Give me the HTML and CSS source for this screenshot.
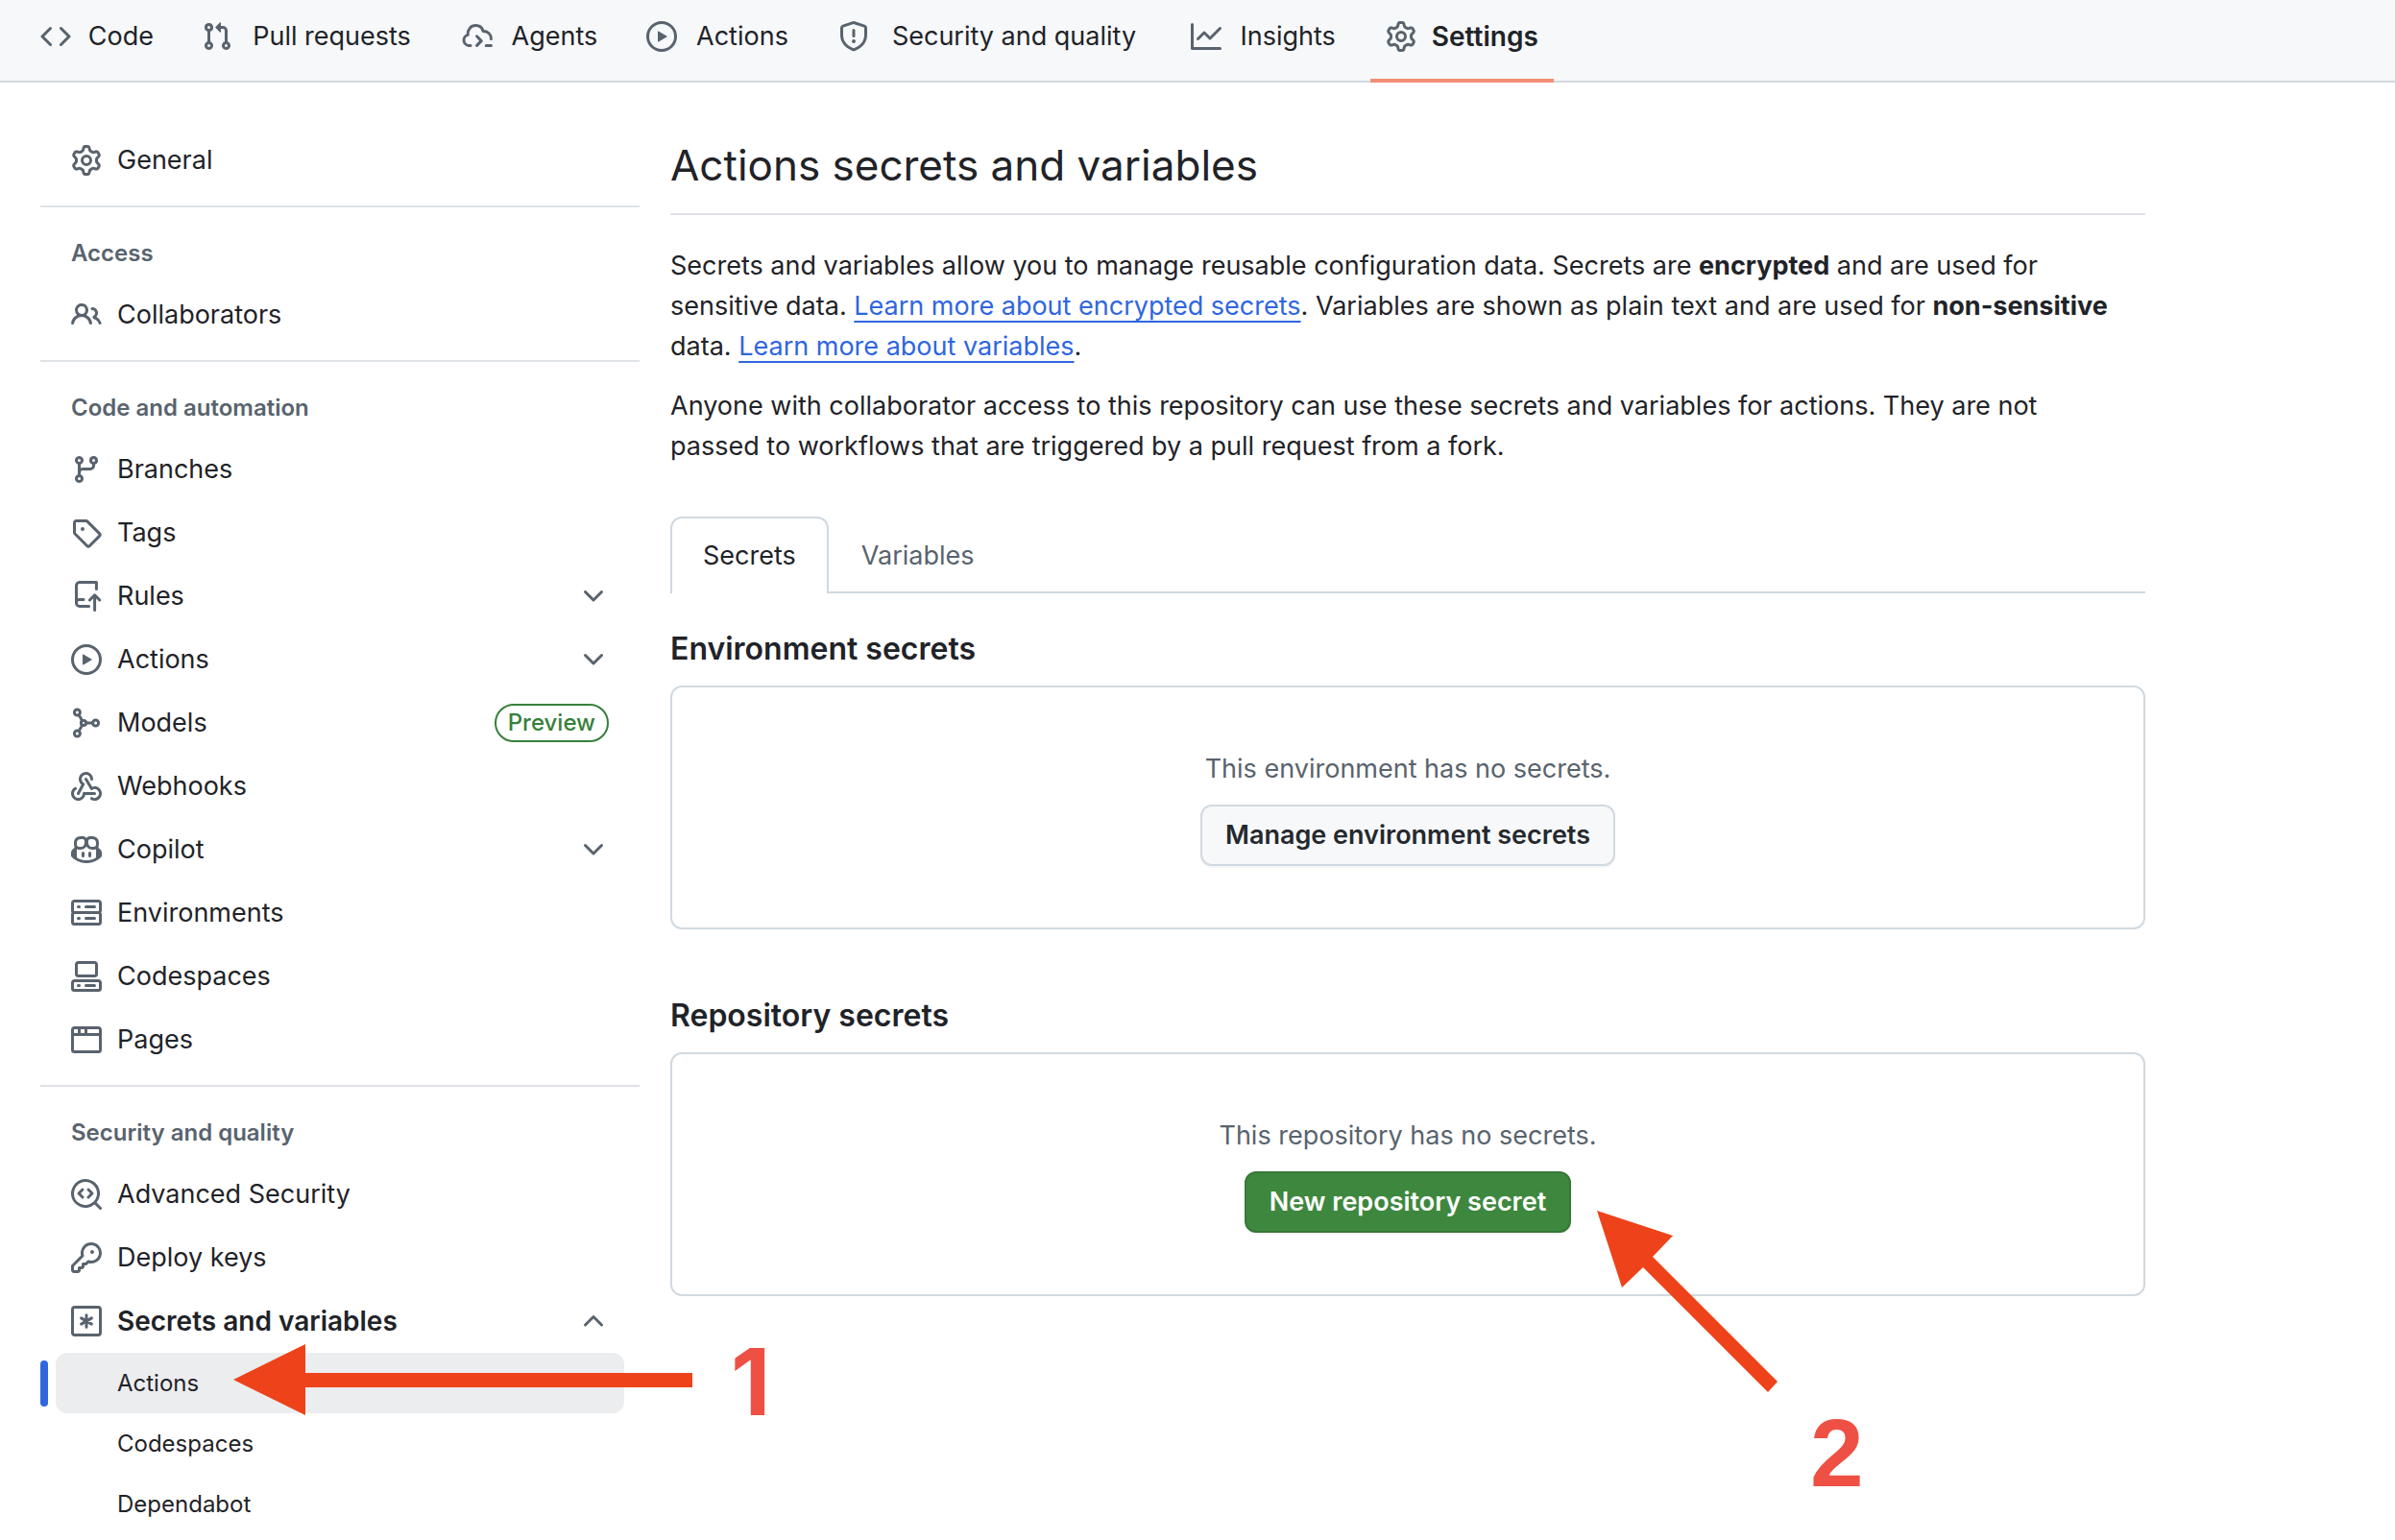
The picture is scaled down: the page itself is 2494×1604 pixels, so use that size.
FILE: index.html
```html
<!DOCTYPE html>
<html lang="en">

<head>
    <meta charset="UTF-8" />
    <title>Actions secrets and variables</title>
    <!-- Styles -->
    <link rel="stylesheet" href="styles.css">
</head>

<body>
    <!-- Icon sprite -->
    <svg class="sprite" aria-hidden="true">
        <symbol id="code" viewBox="0 0 16 16">
            <path d="m11.28 3.22 4.25 4.25a.75.75 0 0 1 0 1.06l-4.25 4.25a.749.749 0 0 1-1.275-.326.749.749 0 0 1 .215-.734L13.94 8l-3.72-3.72a.749.749 0 0 1 .326-1.275.749.749 0 0 1 .734.215Zm-6.56 0a.751.751 0 0 1 1.042.018.751.751 0 0 1 .018 1.042L2.06 8l3.72 3.72a.749.749 0 0 1-.326 1.275.749.749 0 0 1-.734-.215L.47 8.53a.75.75 0 0 1 0-1.06Z" />
        </symbol>
        <symbol id="pull" viewBox="0 0 16 16">
            <path d="M1.5 3.25a2.25 2.25 0 1 1 3 2.122v5.256a2.251 2.251 0 1 1-1.5 0V5.372A2.25 2.25 0 0 1 1.5 3.25Zm5.677-.177L9.573.677A.25.25 0 0 1 10 .854V2.5h1A2.5 2.5 0 0 1 13.5 5v5.628a2.251 2.251 0 1 1-1.5 0V5a1 1 0 0 0-1-1h-1v1.646a.25.25 0 0 1-.427.177L7.177 3.427a.25.25 0 0 1 0-.354ZM3.75 2.5a.75.75 0 1 0 0 1.5.75.75 0 0 0 0-1.5Zm0 9.5a.75.75 0 1 0 0 1.5.75.75 0 0 0 0-1.5Zm8.25.75a.75.75 0 1 0 1.5 0 .75.75 0 0 0-1.5 0Z" />
        </symbol>
        <symbol id="agents" viewBox="0 0 16 16">
            <g fill="none" stroke="currentColor" stroke-width="1.5" stroke-linecap="round" stroke-linejoin="round">
                <path d="M4.5 12.7H3.6A2.8 2.8 0 0 1 3.1 7.2C2.9 4.4 4.7 2.3 7.2 2.3c2 0 3.4 1.2 3.9 3 2.4 0 4.1 1.6 4.1 4" />
                <path d="m7.8 7.9 2.3 2.4-2.3 2.4M12.6 12.7h2.6" />
            </g>
        </symbol>
        <symbol id="play" viewBox="0 0 16 16">
            <path d="M8 0a8 8 0 1 1 0 16A8 8 0 0 1 8 0ZM1.5 8a6.5 6.5 0 1 0 13 0 6.5 6.5 0 0 0-13 0Zm4.879-2.773 4.264 2.559a.25.25 0 0 1 0 .428l-4.264 2.559A.25.25 0 0 1 6 10.559V5.442a.25.25 0 0 1 .379-.215Z" />
        </symbol>
        <symbol id="shield" viewBox="0 0 16 16">
            <path d="M7.467.133a1.748 1.748 0 0 1 1.066 0l5.25 1.68A1.75 1.75 0 0 1 15 3.48V7c0 1.566-.32 3.182-1.303 4.682-.983 1.498-2.585 2.813-5.032 3.855a1.697 1.697 0 0 1-1.33 0c-2.447-1.042-4.049-2.357-5.032-3.855C1.32 10.182 1 8.566 1 7V3.48a1.755 1.755 0 0 1 1.217-1.667Zm.61 1.429a.25.25 0 0 0-.153 0l-5.25 1.68a.25.25 0 0 0-.174.238V7c0 1.358.275 2.666 1.057 3.86.784 1.194 2.121 2.34 4.366 3.297a.196.196 0 0 0 .154 0c2.245-.956 3.582-2.104 4.366-3.298C13.225 9.666 13.5 8.36 13.5 7V3.48a.251.251 0 0 0-.174-.237l-5.25-1.68ZM8.75 4.75v3a.75.75 0 0 1-1.5 0v-3a.75.75 0 0 1 1.5 0ZM9 10.5a1 1 0 1 1-2 0 1 1 0 0 1 2 0Z" />
        </symbol>
        <symbol id="graph" viewBox="0 0 16 16">
            <path d="M1.5 1.75V13.5h13.75a.75.75 0 0 1 0 1.5H.75a.75.75 0 0 1-.75-.75V1.75a.75.75 0 0 1 1.5 0Zm14.28 2.53-5.25 5.25a.75.75 0 0 1-1.06 0L7 7.06 4.28 9.78a.751.751 0 0 1-1.042-.018.751.751 0 0 1-.018-1.042l3.25-3.25a.75.75 0 0 1 1.06 0L10 7.94l4.72-4.72a.751.751 0 0 1 1.042.018.751.751 0 0 1 .018 1.042Z" />
        </symbol>
        <symbol id="gear" viewBox="0 0 16 16">
            <path d="M8 0a8.2 8.2 0 0 1 .701.031C9.444.095 9.99.645 10.16 1.29l.288 1.107c.018.066.079.158.212.224.231.114.454.243.668.386.123.082.233.09.299.071l1.103-.303c.644-.176 1.392.021 1.82.63.27.385.506.792.704 1.218.315.675.111 1.422-.364 1.891l-.814.806c-.049.048-.098.147-.088.294.016.257.016.515 0 .772-.01.147.038.246.088.294l.814.806c.475.469.679 1.216.364 1.891a7.977 7.977 0 0 1-.704 1.217c-.428.61-1.176.807-1.82.63l-1.102-.302c-.067-.019-.177-.011-.3.071a5.909 5.909 0 0 1-.668.386c-.133.066-.194.158-.211.224l-.29 1.106c-.168.646-.715 1.196-1.458 1.26a8.006 8.006 0 0 1-1.402 0c-.743-.064-1.289-.614-1.458-1.26l-.289-1.106c-.018-.066-.079-.158-.212-.224a5.738 5.738 0 0 1-.668-.386c-.123-.082-.233-.09-.299-.071l-1.103.303c-.644.176-1.392-.021-1.82-.63a8.12 8.12 0 0 1-.704-1.218c-.315-.675-.111-1.422.363-1.891l.815-.806c.05-.048.098-.147.088-.294a6.214 6.214 0 0 1 0-.772c.01-.147-.038-.246-.088-.294l-.815-.806C.635 6.045.431 5.298.746 4.623a7.92 7.92 0 0 1 .704-1.217c.428-.61 1.176-.807 1.82-.63l1.102.302c.067.019.177.011.3-.071.214-.143.437-.272.668-.386.133-.066.194-.158.211-.224l.29-1.106C6.009.645 6.556.095 7.299.03 7.53.01 7.764 0 8 0Zm-.571 1.525c-.036.003-.108.036-.137.146l-.289 1.105c-.147.561-.549.967-.998 1.189-.173.086-.34.183-.5.29-.417.278-.97.423-1.529.27l-1.103-.303c-.109-.03-.175.016-.195.045-.22.312-.412.644-.573.99-.014.031-.021.11.059.19l.815.806c.411.406.562.957.53 1.456a4.709 4.709 0 0 0 0 .582c.032.499-.119 1.05-.53 1.456l-.815.806c-.081.08-.073.159-.059.19.162.346.353.677.573.989.02.03.085.076.195.046l1.102-.303c.56-.153 1.113-.008 1.53.27.161.107.328.204.501.29.447.222.85.629.997 1.189l.289 1.105c.029.109.101.143.137.146a6.6 6.6 0 0 0 1.142 0c.036-.003.108-.036.137-.146l.289-1.105c.147-.561.549-.967.998-1.189.173-.086.34-.183.5-.29.417-.278.97-.423 1.529-.27l1.103.303c.109.029.175-.016.195-.045.22-.313.411-.644.573-.99.014-.031.021-.11-.059-.19l-.815-.806c-.411-.406-.562-.957-.53-1.456a4.709 4.709 0 0 0 0-.582c-.032-.499.119-1.05.53-1.456l.815-.806c.081-.08.073-.159.059-.19a6.464 6.464 0 0 0-.573-.989c-.02-.03-.085-.076-.195-.046l-1.102.303c-.56.153-1.113.008-1.53-.27a4.44 4.44 0 0 0-.501-.29c-.447-.222-.85-.629-.997-1.189l-.289-1.105c-.029-.11-.101-.143-.137-.146a6.6 6.6 0 0 0-1.142 0ZM11 8a3 3 0 1 1-6 0 3 3 0 0 1 6 0ZM9.5 8a1.5 1.5 0 1 0-3.001.001A1.5 1.5 0 0 0 9.5 8Z" />
        </symbol>
        <symbol id="people" viewBox="0 0 16 16">
            <path d="M2 5.5a3.5 3.5 0 1 1 5.898 2.549 5.508 5.508 0 0 1 3.034 4.084.75.75 0 1 1-1.482.235 4 4 0 0 0-7.9 0 .75.75 0 0 1-1.482-.236A5.507 5.507 0 0 1 3.102 8.05 3.493 3.493 0 0 1 2 5.5ZM11 4a3.001 3.001 0 0 1 2.22 5.018 5.01 5.01 0 0 1 2.56 3.012.749.749 0 0 1-.885.954.752.752 0 0 1-.549-.514 3.507 3.507 0 0 0-2.522-2.372.75.75 0 0 1-.574-.73v-.352a.75.75 0 0 1 .416-.672A1.5 1.5 0 0 0 11 5.5.75.75 0 0 1 11 4Zm-5.5-.5a2 2 0 1 0-.001 3.999A2 2 0 0 0 5.5 3.5Z" />
        </symbol>
        <symbol id="branch" viewBox="0 0 16 16">
            <path d="M9.5 3.25a2.25 2.25 0 1 1 3 2.122V6A2.5 2.5 0 0 1 10 8.5H6a1 1 0 0 0-1 1v1.128a2.251 2.251 0 1 1-1.5 0V5.372a2.25 2.25 0 1 1 1.5 0v1.836A2.493 2.493 0 0 1 6 7h4a1 1 0 0 0 1-1v-.628A2.25 2.25 0 0 1 9.5 3.25Zm-6 0a.75.75 0 1 0 1.5 0 .75.75 0 0 0-1.5 0Zm8.25-.75a.75.75 0 1 0 0 1.5.75.75 0 0 0 0-1.5ZM4.25 12a.75.75 0 1 0 0 1.5.75.75 0 0 0 0-1.5Z" />
        </symbol>
        <symbol id="tag" viewBox="0 0 16 16">
            <path d="M1 7.775V2.75C1 1.784 1.784 1 2.75 1h5.025c.464 0 .91.184 1.238.513l6.25 6.25a1.75 1.75 0 0 1 0 2.474l-5.026 5.026a1.75 1.75 0 0 1-2.474 0l-6.25-6.25A1.752 1.752 0 0 1 1 7.775Zm1.5 0c0 .066.026.13.073.177l6.25 6.25a.25.25 0 0 0 .354 0l5.025-5.025a.25.25 0 0 0 0-.354l-6.25-6.25a.25.25 0 0 0-.177-.073H2.75a.25.25 0 0 0-.25.25ZM6 5a1 1 0 1 1 0 2 1 1 0 0 1 0-2Z" />
        </symbol>
        <symbol id="rules" viewBox="0 0 16 16">
            <g fill="none" stroke="currentColor" stroke-width="1.5" stroke-linecap="round" stroke-linejoin="round">
                <path d="M13.2 4.2V.75H4.4A1.7 1.7 0 0 0 2.75 2.4v9.2a1.7 1.7 0 0 0 1.7 1.65h4.8" />
                <path d="M2.9 10.4a1.7 1.7 0 0 1 1.5-.7h2.1" />
                <path d="M12.3 15.2V7.5M9.7 10l2.6-2.6L14.9 10" />
            </g>
        </symbol>
        <symbol id="models" viewBox="0 0 16 16">
            <g fill="none" stroke="currentColor" stroke-width="1.5">
                <circle cx="3.2" cy="2.5" r="1.5" />
                <circle cx="3.2" cy="13.5" r="1.5" />
                <circle cx="6.5" cy="8" r="1.3" />
                <circle cx="12.8" cy="8" r="1.5" />
                <path d="M4 3.8 5.8 6.8M4 12.2 5.8 9.2M7.8 8h3.5" />
            </g>
        </symbol>
        <symbol id="webhook" viewBox="0 0 16 16">
            <path d="M5.5 4.25a2.25 2.25 0 0 1 4.5 0 .75.75 0 0 0 1.5 0 3.75 3.75 0 1 0-6.14 2.889l-2.272 4.258a.75.75 0 0 0 1.324.706L7 7.25a.75.75 0 0 0-.309-1.015A2.25 2.25 0 0 1 5.5 4.25Z" />
            <path d="M7.364 3.607a.75.75 0 0 1 1.03.257l2.608 4.349a3.75 3.75 0 1 1-.628 6.785.75.75 0 0 1 .752-1.299 2.25 2.25 0 1 0-.033-3.88.75.75 0 0 1-1.03-.256L7.107 4.636a.75.75 0 0 1 .257-1.03Z" />
            <path d="M2.9 8.776A.75.75 0 0 1 2.625 9.8 2.25 2.25 0 1 0 6 11.75a.75.75 0 0 1 .75-.751h5.5a.75.75 0 0 1 0 1.5H7.425a3.751 3.751 0 1 1-5.55-3.998.75.75 0 0 1 1.024.274Z" />
        </symbol>
        <symbol id="copilot" viewBox="0 0 16 16">
            <path d="M7.998 15.035c-4.562 0-7.873-2.914-7.998-3.749V9.338c.085-.628.677-1.686 1.588-2.065.013-.07.024-.143.036-.218.029-.183.06-.384.126-.612-.201-.508-.254-1.084-.254-1.656 0-.87.128-1.769.693-2.484.579-.733 1.494-1.124 2.724-1.261 1.206-.134 2.262.034 2.944.765.05.053.096.108.139.165.044-.057.094-.112.143-.165.682-.731 1.738-.899 2.944-.765 1.23.137 2.145.528 2.724 1.261.566.715.693 1.614.693 2.484 0 .572-.053 1.148-.254 1.656.066.228.098.429.126.612.012.076.024.148.037.218.924.385 1.522 1.471 1.591 2.095v1.872c0 .766-3.351 3.795-8.002 3.795Zm0-1.485c2.28 0 4.584-1.11 5.002-1.433V7.862l-.023-.116c-.49.21-1.075.291-1.727.291-1.146 0-2.059-.327-2.71-.991A3.222 3.222 0 0 1 8 6.303a3.24 3.24 0 0 1-.544.743c-.65.664-1.563.991-2.71.991-.652 0-1.236-.081-1.727-.291l-.023.116v4.255c.419.323 2.722 1.433 5.002 1.433ZM6.762 2.83c-.193-.206-.637-.413-1.682-.297-1.019.113-1.479.404-1.713.7-.247.312-.369.789-.369 1.554 0 .793.129 1.171.308 1.371.162.181.519.379 1.442.379.853 0 1.339-.235 1.638-.54.315-.322.527-.827.617-1.553.117-.935-.037-1.395-.241-1.614Zm4.155-.297c-1.044-.116-1.488.091-1.681.297-.204.219-.359.679-.242 1.614.091.726.303 1.231.618 1.553.299.305.784.54 1.638.54.922 0 1.28-.198 1.442-.379.179-.2.308-.578.308-1.371 0-.765-.123-1.242-.37-1.554-.233-.296-.693-.587-1.713-.7Z" />
            <path d="M6.25 9.037a.75.75 0 0 1 .75.75v1.501a.75.75 0 0 1-1.5 0V9.787a.75.75 0 0 1 .75-.75Zm4.25.75v1.501a.75.75 0 0 1-1.5 0V9.787a.75.75 0 0 1 1.5 0Z" />
        </symbol>
        <symbol id="server" viewBox="0 0 16 16">
            <path d="M1.75 1h12.5c.966 0 1.75.784 1.75 1.75v4c0 .372-.116.717-.314 1 .198.283.314.628.314 1v4a1.75 1.75 0 0 1-1.75 1.75H1.75A1.75 1.75 0 0 1 0 12.75v-4c0-.358.109-.707.314-1a1.739 1.739 0 0 1-.314-1v-4C0 1.784.784 1 1.75 1ZM1.5 2.75v4c0 .138.112.25.25.25h12.5a.25.25 0 0 0 .25-.25v-4a.25.25 0 0 0-.25-.25H1.75a.25.25 0 0 0-.25.25Zm.25 5.75a.25.25 0 0 0-.25.25v4c0 .138.112.25.25.25h12.5a.25.25 0 0 0 .25-.25v-4a.25.25 0 0 0-.25-.25ZM7 4.75A.75.75 0 0 1 7.75 4h4.5a.75.75 0 0 1 0 1.5h-4.5A.75.75 0 0 1 7 4.75ZM7.75 10h4.5a.75.75 0 0 1 0 1.5h-4.5a.75.75 0 0 1 0-1.5ZM3 4.75A.75.75 0 0 1 3.75 4h.5a.75.75 0 0 1 0 1.5h-.5A.75.75 0 0 1 3 4.75ZM3.75 10h.5a.75.75 0 0 1 0 1.5h-.5a.75.75 0 0 1 0-1.5Z" />
        </symbol>
        <symbol id="codespaces" viewBox="0 0 16 16">
            <path d="M0 11.25c0-.966.784-1.75 1.75-1.75h12.5c.966 0 1.75.784 1.75 1.75v3A1.75 1.75 0 0 1 14.25 16H1.75A1.75 1.75 0 0 1 0 14.25Zm2-9.5C2 .784 2.784 0 3.75 0h8.5C13.216 0 14 .784 14 1.75v5a1.75 1.75 0 0 1-1.75 1.75h-8.5A1.75 1.75 0 0 1 2 6.75Zm1.75-.25a.25.25 0 0 0-.25.25v5c0 .138.112.25.25.25h8.5a.25.25 0 0 0 .25-.25v-5a.25.25 0 0 0-.25-.25Zm-2 9.5a.25.25 0 0 0-.25.25v3c0 .138.112.25.25.25h12.5a.25.25 0 0 0 .25-.25v-3a.25.25 0 0 0-.25-.25Z" />
            <path d="M7 12.75a.75.75 0 0 1 .75-.75h4.5a.75.75 0 0 1 0 1.5h-4.5a.75.75 0 0 1-.75-.75Zm-4 0a.75.75 0 0 1 .75-.75h.5a.75.75 0 0 1 0 1.5h-.5a.75.75 0 0 1-.75-.75Z" />
        </symbol>
        <symbol id="browser" viewBox="0 0 16 16">
            <path d="M0 2.75C0 1.784.784 1 1.75 1h12.5c.966 0 1.75.784 1.75 1.75v10.5A1.75 1.75 0 0 1 14.25 15H1.75A1.75 1.75 0 0 1 0 13.25ZM14.5 6h-13v7.25c0 .138.112.25.25.25h12.5a.25.25 0 0 0 .25-.25Zm-6-3.5v2h6V2.75a.25.25 0 0 0-.25-.25ZM5 2.5v2h2v-2Zm-3.25 0a.25.25 0 0 0-.25.25V4.5h2v-2Z" />
        </symbol>
        <symbol id="codescan" viewBox="0 0 16 16">
            <path d="M8.47 4.97a.75.75 0 0 0 0 1.06L9.94 7.5 8.47 8.97a.75.75 0 1 0 1.06 1.06l2-2a.75.75 0 0 0 0-1.06l-2-2a.75.75 0 0 0-1.06 0ZM6.53 6.03a.75.75 0 0 0-1.06-1.06l-2 2a.75.75 0 0 0 0 1.06l2 2a.75.75 0 1 0 1.06-1.06L5.06 7.5l1.47-1.47Z" />
            <path d="M12.246 13.307a7.501 7.501 0 1 1 1.06-1.06l2.474 2.473a.749.749 0 0 1-1.06 1.06ZM1.5 7.5a6.002 6.002 0 0 0 3.608 5.504 6.002 6.002 0 0 0 6.486-1.117.748.748 0 0 1 .292-.293A6 6 0 1 0 1.5 7.5Z" />
        </symbol>
        <symbol id="key" viewBox="0 0 16 16">
            <path d="M10.5 0a5.499 5.499 0 1 1-1.288 10.848l-.932.932a.749.749 0 0 1-.53.22H7v.75a.749.749 0 0 1-.22.53l-.5.5a.749.749 0 0 1-.53.22H5v.75a.749.749 0 0 1-.22.53l-.5.5a.749.749 0 0 1-.53.22h-2A1.75 1.75 0 0 1 0 14.25v-2c0-.199.079-.389.22-.53l4.932-4.932A5.5 5.5 0 0 1 10.5 0Zm-4 5.5c-.001.431.069.86.205 1.269a.75.75 0 0 1-.181.768L1.5 12.56v1.69c0 .138.112.25.25.25h1.69l.06-.06v-1.19a.75.75 0 0 1 .75-.75h1.19l.06-.06v-1.19a.75.75 0 0 1 .75-.75h1.19l1.023-1.025a.75.75 0 0 1 .768-.18A4 4 0 1 0 6.5 5.5ZM11 6a1 1 0 1 1 0-2 1 1 0 0 1 0 2Z" />
        </symbol>
        <symbol id="asterisk" viewBox="0 0 16 16">
            <g fill="none" stroke="currentColor" stroke-width="1.5" stroke-linecap="round">
                <rect x=".75" y=".75" width="14.5" height="14.5" rx="1.2" />
                <path d="M8 4.9v6.2M5.3 6.45l5.4 3.1M10.7 6.45l-5.4 3.1" />
            </g>
        </symbol>
        <symbol id="down" viewBox="0 0 16 16">
            <path d="M12.78 5.22a.749.749 0 0 1 0 1.06l-4.25 4.25a.749.749 0 0 1-1.06 0L3.22 6.28a.749.749 0 1 1 1.06-1.06L8 8.939l3.72-3.719a.749.749 0 0 1 1.06 0Z" />
        </symbol>
        <symbol id="up" viewBox="0 0 16 16">
            <path d="M3.22 10.53a.749.749 0 0 1 0-1.06l4.25-4.25a.749.749 0 0 1 1.06 0l4.25 4.25a.749.749 0 1 1-1.06 1.06L8 6.811 4.28 10.53a.749.749 0 0 1-1.06 0Z" />
        </symbol>
    </svg>

    <nav class="topnav" aria-label="Repository">
        <a class="topnav-item" href="#"><svg class="icon"><use href="#code" /></svg><span class="topnav-text" data-content="Code">Code</span></a>
        <a class="topnav-item" href="#"><svg class="icon"><use href="#pull" /></svg><span class="topnav-text" data-content="Pull requests">Pull requests</span></a>
        <a class="topnav-item" href="#"><svg class="icon"><use href="#agents" /></svg><span class="topnav-text" data-content="Agents">Agents</span></a>
        <a class="topnav-item" href="#"><svg class="icon"><use href="#play" /></svg><span class="topnav-text" data-content="Actions">Actions</span></a>
        <a class="topnav-item" href="#"><svg class="icon"><use href="#shield" /></svg><span class="topnav-text" data-content="Security and quality">Security and quality</span></a>
        <a class="topnav-item" href="#"><svg class="icon"><use href="#graph" /></svg><span class="topnav-text" data-content="Insights">Insights</span></a>
        <a class="topnav-item selected" href="#" aria-current="page"><svg class="icon"><use href="#gear" /></svg><span class="topnav-text" data-content="Settings">Settings</span></a>
    </nav>

    <div class="layout">
        <nav class="sidebar" aria-label="Settings">
            <ul class="group">
                <li><a class="item" href="#"><svg class="icon"><use href="#gear" /></svg>General</a></li>
            </ul>

            <h3 class="group-title">Access</h3>
            <ul class="group">
                <li><a class="item" href="#"><svg class="icon"><use href="#people" /></svg>Collaborators</a></li>
            </ul>

            <h3 class="group-title">Code and automation</h3>
            <ul class="group">
                <li><a class="item" href="#"><svg class="icon"><use href="#branch" /></svg>Branches</a></li>
                <li><a class="item" href="#"><svg class="icon"><use href="#tag" /></svg>Tags</a></li>
                <li><button class="item" type="button"><svg class="icon"><use href="#rules" /></svg>Rules<svg class="icon trailing"><use href="#down" /></svg></button></li>
                <li><button class="item" type="button"><svg class="icon"><use href="#play" /></svg>Actions<svg class="icon trailing"><use href="#down" /></svg></button></li>
                <li><a class="item" href="#"><svg class="icon"><use href="#models" /></svg>Models<span class="label trailing">Preview</span></a></li>
                <li><a class="item" href="#"><svg class="icon"><use href="#webhook" /></svg>Webhooks</a></li>
                <li><button class="item" type="button"><svg class="icon"><use href="#copilot" /></svg>Copilot<svg class="icon trailing"><use href="#down" /></svg></button></li>
                <li><a class="item" href="#"><svg class="icon"><use href="#server" /></svg>Environments</a></li>
                <li><a class="item" href="#"><svg class="icon"><use href="#codespaces" /></svg>Codespaces</a></li>
                <li><a class="item" href="#"><svg class="icon"><use href="#browser" /></svg>Pages</a></li>
            </ul>

            <h3 class="group-title">Security and quality</h3>
            <ul class="group">
                <li><a class="item" href="#"><svg class="icon"><use href="#codescan" /></svg>Advanced Security</a></li>
                <li><a class="item" href="#"><svg class="icon"><use href="#key" /></svg>Deploy keys</a></li>
                <li>
                    <button class="item open" type="button" aria-expanded="true"><svg class="icon"><use href="#asterisk" /></svg>Secrets and variables<svg class="icon trailing"><use href="#up" /></svg></button>
                    <ul class="subgroup">
                        <li><a class="subitem active" href="#" aria-current="page">Actions</a></li>
                        <li><a class="subitem" href="#">Codespaces</a></li>
                        <li><a class="subitem" href="#">Dependabot</a></li>
                    </ul>
                </li>
            </ul>
        </nav>

        <main class="content">
            <h1 class="title">Actions secrets and variables</h1>
            <p class="text">Secrets and variables allow you to manage reusable configuration data. Secrets are <strong>encrypted</strong> and are used for sensitive data. <a class="link" href="#">Learn more about encrypted secrets</a>. Variables are shown as plain text and are used for <strong>non-sensitive</strong> data. <a class="link" href="#">Learn more about variables</a>.</p>
            <p class="text">Anyone with collaborator access to this repository can use these secrets and variables for actions. They are not passed to workflows that are triggered by a pull request from a fork.</p>

            <nav class="tabs" aria-label="Secrets and variables">
                <a class="tab current" href="#" aria-current="page">Secrets</a>
                <a class="tab" href="#">Variables</a>
            </nav>

            <section class="section">
                <h2 class="subtitle">Environment secrets</h2>
                <div class="box">
                    <p class="empty">This environment has no secrets.</p>
                    <button class="btn" type="button">Manage environment secrets</button>
                </div>
            </section>

            <section class="section">
                <h2 class="subtitle">Repository secrets</h2>
                <div class="box">
                    <p class="empty">This repository has no secrets.</p>
                    <button class="btn primary" type="button">New repository secret</button>
                </div>
            </section>
        </main>
    </div>

    <!-- Step markers over the page -->
    <svg class="arrow arrow-one" viewBox="0 0 478 74" aria-hidden="true">
        <polygon points="0,37 75,0 75,30 478,30 478,45 75,45 75,74" />
    </svg>
    <span class="step step-one">1</span>
    <svg class="arrow arrow-two" viewBox="0 0 188 189" aria-hidden="true">
        <polygon points="0,0 79,26 58,48 188,178 178,189 48,59 26,80" />
    </svg>
    <span class="step step-two">2</span>
</body>

</html>
```

FILE: styles.css
```css
* {
    margin: 0;
    padding: 0;
    box-sizing: border-box;
}

body {
    position: relative;
    background: #fff;
    color: #1f2328;
    font-family: Inter, "Liberation Sans", sans-serif;
    font-size: 27px;
    line-height: 42px;
}

ul {
    list-style: none;
}

a {
    color: inherit;
    text-decoration: none;
}

button {
    font: inherit;
    color: inherit;
    background: none;
    border: none;
    cursor: pointer;
}

strong {
    font-weight: 700;
}

.sprite {
    display: none;
}

.icon {
    flex: none;
    width: 32px;
    height: 32px;
    color: #59636e;
    fill: currentColor;
}

/* top navigation */
.topnav {
    display: flex;
    gap: 16px;
    height: 86px;
    padding: 0 26px;
    background: #f6f8fa;
    border-bottom: 2px solid #d1d9e0;
}

.topnav-item {
    display: flex;
    align-items: center;
    gap: 16px;
    height: 86px;
    padding: 0 16px 10px;
    white-space: nowrap;
}

.topnav-text {
    text-align: center;
}

/* keeps room for the bold text of the selected item */
.topnav-text::before {
    content: attr(data-content);
    display: block;
    height: 0;
    font-size: 28px;
    font-weight: 600;
    visibility: hidden;
}

.selected {
    padding-bottom: 6px;
    border-bottom: 4px solid #f18f76;
    font-size: 28px;
    font-weight: 600;
}

/* layout */
.layout {
    display: flex;
    gap: 32px;
    padding: 47px 42px 0;
}

.sidebar {
    flex: none;
    width: 624px;
}

.content {
    flex: 1;
    max-width: 1536px;
    padding-top: 1px;
}

/* sidebar */
.group-title {
    height: 80px;
    margin-top: 15px;
    padding: 29px 32px 11px;
    border-top: 2px solid #dfe3e8;
    color: #59636e;
    font-size: 24px;
    font-weight: 600;
    line-height: 38px;
}

.item {
    display: flex;
    align-items: center;
    gap: 16px;
    width: 592px;
    height: 66px;
    margin: 0 16px;
    padding: 1px 16px 0;
    text-align: left;
}

.open {
    font-size: 28px;
    font-weight: 600;
}

.trailing {
    margin-left: auto;
}

.label {
    padding: 0 12px;
    border: 2px solid #37803a;
    border-radius: 20px;
    color: #37803a;
    font-size: 24px;
    font-weight: 500;
    line-height: 36px;
}

.subgroup {
    padding-top: 1px;
}

.subitem {
    position: relative;
    display: block;
    width: 592px;
    height: 63px;
    margin: 0 16px;
    padding-left: 64px;
    border-radius: 12px;
    font-size: 24px;
    line-height: 63px;
}

.active {
    background: #ecedef;
}

.active::before {
    content: "";
    position: absolute;
    top: 8px;
    left: -16px;
    width: 8px;
    height: 48px;
    border-radius: 12px;
    background: #2f68de;
}

/* content */
.title {
    margin-bottom: 32px;
    padding: 2px 0 14px;
    border-bottom: 2px solid #dfe3e8;
    font-size: 44px;
    font-weight: 400;
    line-height: 72px;
}

.text {
    margin-bottom: 20px;
    padding-right: 24px;
}

.link {
    color: #2f66de;
    text-decoration: underline;
    text-decoration-thickness: 2px;
    text-decoration-skip-ink: none;
    text-underline-offset: 6px;
}

.tabs {
    display: flex;
    height: 80px;
    margin: 52px 0 32px;
    border-bottom: 2px solid #d1d9e0;
}

.tab {
    height: 80px;
    padding: 18px 32px;
    border: 2px solid transparent;
    border-bottom: none;
    color: #59636e;
}

.current {
    background: #fff;
    border-color: #d1d9e0;
    border-radius: 12px 12px 0 0;
    color: #1f2328;
}

.section {
    margin-bottom: 64px;
}

.subtitle {
    padding: 2px 0 14px;
    font-size: 32px;
    font-weight: 600;
    line-height: 48px;
}

.box {
    display: flex;
    flex-direction: column;
    align-items: center;
    gap: 16px;
    padding: 64px;
    border: 2px solid #d1d9e0;
    border-radius: 12px;
}

.empty {
    color: #59636e;
}

.btn {
    height: 64px;
    padding: 0 24px;
    border: 2px solid #d1d9e0;
    border-radius: 12px;
    background: #f6f8fa;
    color: #25292e;
    font-weight: 600;
    box-shadow: 0 2px 0 rgba(31, 35, 40, 0.04);
}

.primary {
    background: #3e873e;
    border-color: #377837;
    color: #fff;
}

/* step markers */
.arrow {
    position: absolute;
    fill: #ee421a;
}

.arrow-one {
    top: 1400px;
    left: 243px;
    width: 478px;
    height: 74px;
}

.arrow-two {
    top: 1261px;
    left: 1663px;
    width: 188px;
    height: 189px;
}

.step {
    position: absolute;
    color: #ee5044;
    font-family: "Liberation Sans", sans-serif;
    font-size: 100px;
    font-weight: 700;
    line-height: 100px;
}

.step-one {
    top: 1389px;
    left: 761px;
    font-family: Inter, sans-serif;
    font-size: 96px;
}

.step-two {
    top: 1463px;
    left: 1885px;
}
```
